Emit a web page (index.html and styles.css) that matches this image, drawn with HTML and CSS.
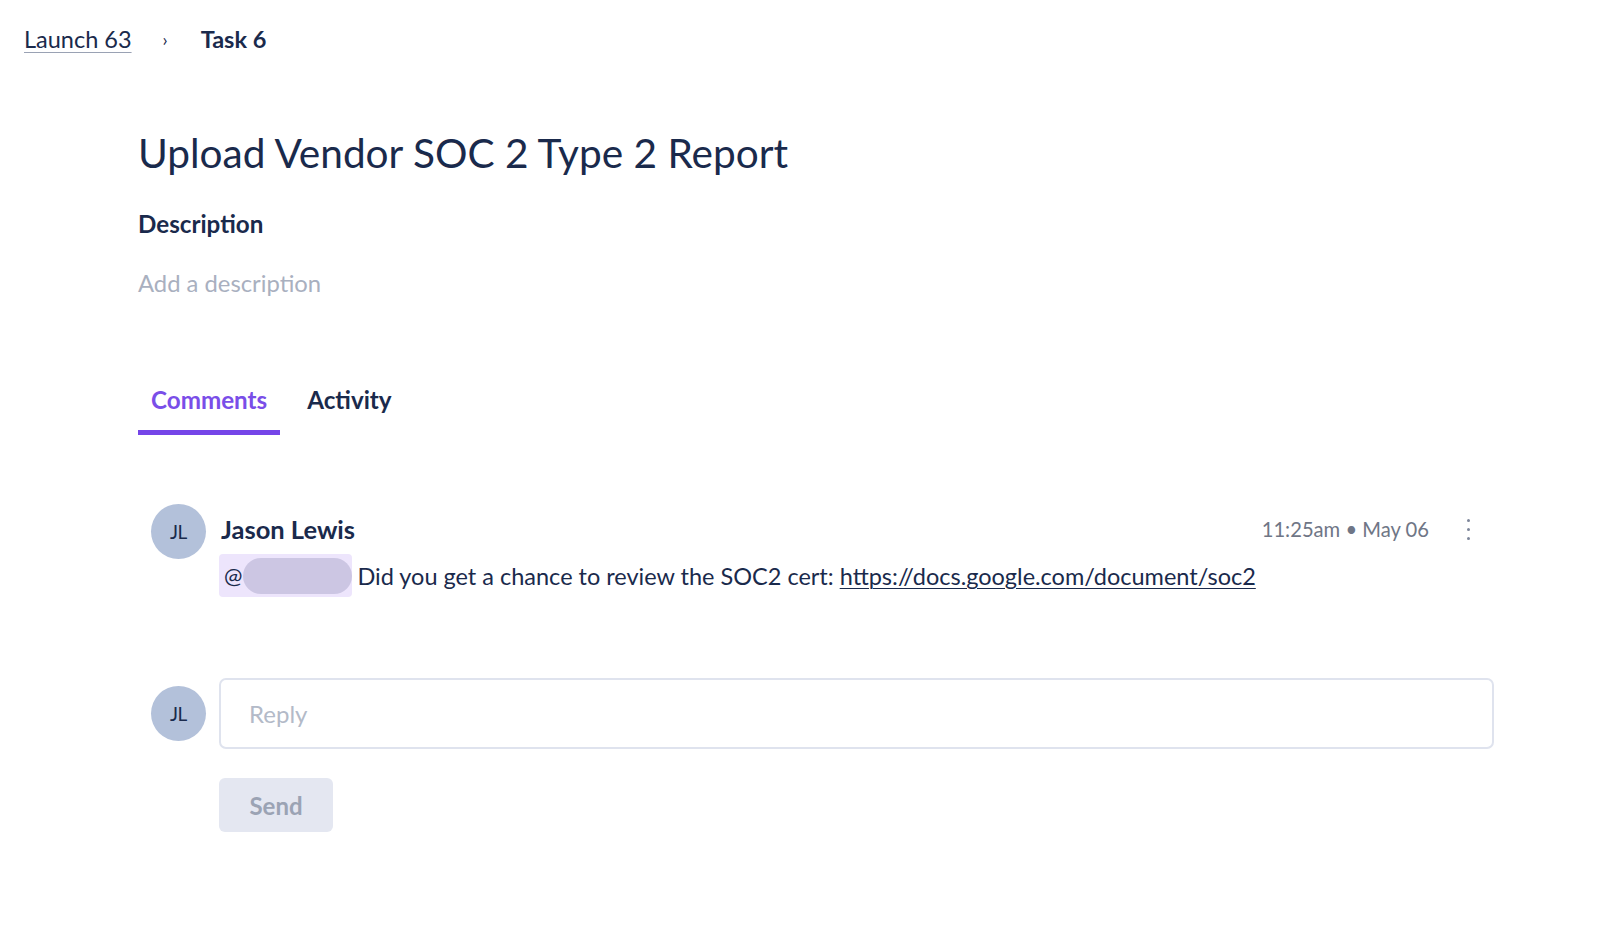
FILE: index.html
```html
<!DOCTYPE html>
<html lang="en">
<head>
<meta charset="utf-8">
<title>Task 6</title>
<link rel="stylesheet" href="styles.css">
</head>
<body>
<nav class="crumbs">
  <a class="crumb-link" href="#">Launch 63</a>
  <span class="crumb-sep">›</span>
  <span class="crumb-current">Task 6</span>
</nav>
<main class="task">
  <h1 class="task-title">Upload Vendor SOC 2 Type 2 Report</h1>
  <h2 class="section-label">Description</h2>
  <p class="desc-placeholder">Add a description</p>

  <div class="tabs">
    <div class="tab tab-active">Comments</div>
    <div class="tab">Activity</div>
  </div>

  <section class="comments">
    <div class="comment">
      <div class="avatar">JL</div>
      <div class="comment-body">
        <div class="comment-head">
          <span class="author">Jason Lewis</span>
          <div class="meta">
            <span class="time">11:25am • May 06</span>
            <button class="kebab" aria-label="More"><span></span><span></span><span></span></button>
          </div>
        </div>
        <div class="comment-text">
          <span class="mention">@<span class="mention-blur"></span></span>
          <span class="msg">Did you get a chance to review the SOC2 cert: <a href="#" class="link">https://docs.google.com/document/soc2</a></span>
        </div>
      </div>
    </div>

    <div class="reply">
      <div class="avatar">JL</div>
      <div class="reply-input">Reply</div>
    </div>
    <div class="reply-actions">
      <button class="send">Send</button>
    </div>
  </section>
</main>
</body>
</html>
```

FILE: styles.css
```css
* { box-sizing: border-box; }
html, body { margin: 0; padding: 0; background: #ffffff; }
body {
  font-family: Lato, "Noto Sans", sans-serif;
  color: #1a2a4c;
}

.crumbs {
  display: flex;
  align-items: center;
  padding: 25px 24px 0;
  height: 52px;
  font-size: 23.5px;
  line-height: 26px;
}
.crumb-link {
  color: #1a2a4c;
  text-decoration: underline;
  text-decoration-color: #9aa2b4;
  text-underline-offset: 4px;
  text-decoration-thickness: 1px;
}
.crumb-sep {
  margin: 0 33px 0 31px;
  font-size: 18px;
  color: #1a2a4c;
}
.crumb-current { font-weight: 700; }

.task {
  padding: 0 106px 0 138px;
}
.task-title {
  margin: 77px 0 0;
  font-size: 40.6px;
  line-height: 48px;
  font-weight: 400;
  color: #1a2a4c;
}
.section-label {
  margin: 33px 0 0;
  font-size: 24.2px;
  line-height: 28px;
  font-weight: 700;
}
.desc-placeholder {
  margin: 31px 0 0;
  font-size: 23.8px;
  line-height: 28px;
  color: #a9b0bf;
}

.tabs {
  display: flex;
  gap: 12px;
  margin-top: 89px;
}
.tab {
  padding: 0 13px 16px;
  font-size: 24.2px;
  line-height: 28px;
  font-weight: 700;
  color: #1a2a4c;
  border-bottom: 5px solid transparent;
}
.tab + .tab { margin-left: 2px; }
.tab-active {
  color: #7a4ee8;
  border-bottom-color: #7545e8;
}

.comments { padding-left: 13px; }
.comment {
  display: flex;
  gap: 13px;
  margin-top: 69px;
}
.avatar {
  flex: none;
  width: 55px;
  height: 55px;
  border-radius: 50%;
  background: #b3c1da;
  color: #1a2a4c;
  display: flex;
  align-items: center;
  justify-content: center;
  font-size: 19px;
  letter-spacing: -0.5px;
}
.comment-body {
  flex: 1;
  padding-top: 10px;
}
.comment-head {
  display: flex;
  justify-content: space-between;
  align-items: center;
  height: 30px;
  padding-right: 16px;
}
.author {
  margin-left: 2px;
  font-size: 25.5px;
  font-weight: 700;
  line-height: 30px;
}
.meta {
  display: flex;
  align-items: center;
  gap: 29px;
}
.time {
  font-size: 20.2px;
  color: #6f7686;
}
.kebab {
  display: flex;
  flex-direction: column;
  align-items: center;
  gap: 6px;
  width: 20px;
  padding: 0;
  border: 0;
  background: none;
}
.kebab span {
  width: 3px;
  height: 3px;
  border-radius: 50%;
  background: #7d869a;
}
.comment-text {
  display: flex;
  align-items: center;
  margin-top: 10px;
  font-size: 23.5px;
  line-height: 28px;
}
.mention {
  display: inline-flex;
  align-items: center;
  height: 43px;
  padding: 0 0 0 5px;
  background: #ede5fc;
  border-radius: 4px;
  color: #1a2a4c;
  font-size: 22px;
}
.mention-blur {
  display: inline-block;
  width: 109px;
  height: 36px;
  margin-left: 1px;
  border-radius: 18px;
  background: #ccc6e3;
}
.msg { margin-left: 5px; }
.link {
  color: #1a2a4c;
  text-decoration: underline;
  text-underline-offset: 3px;
  text-decoration-thickness: 1px;
}

.reply {
  display: flex;
  align-items: center;
  gap: 13px;
  margin-top: 81px;
}
.reply-input {
  flex: 1;
  height: 71px;
  border: 2px solid #dfe3ee;
  border-radius: 7px;
  padding: 0 28px;
  display: flex;
  align-items: center;
  font-size: 24px;
  color: #b3bac8;
}
.reply-actions {
  padding-left: 68px;
  margin-top: 29px;
}
.send {
  width: 114px;
  height: 54px;
  border: 0;
  border-radius: 6px;
  background: #e4e7f1;
  color: #9ba3b4;
  font-family: Lato, "Noto Sans", sans-serif;
  font-size: 24px;
  font-weight: 700;
}
```
